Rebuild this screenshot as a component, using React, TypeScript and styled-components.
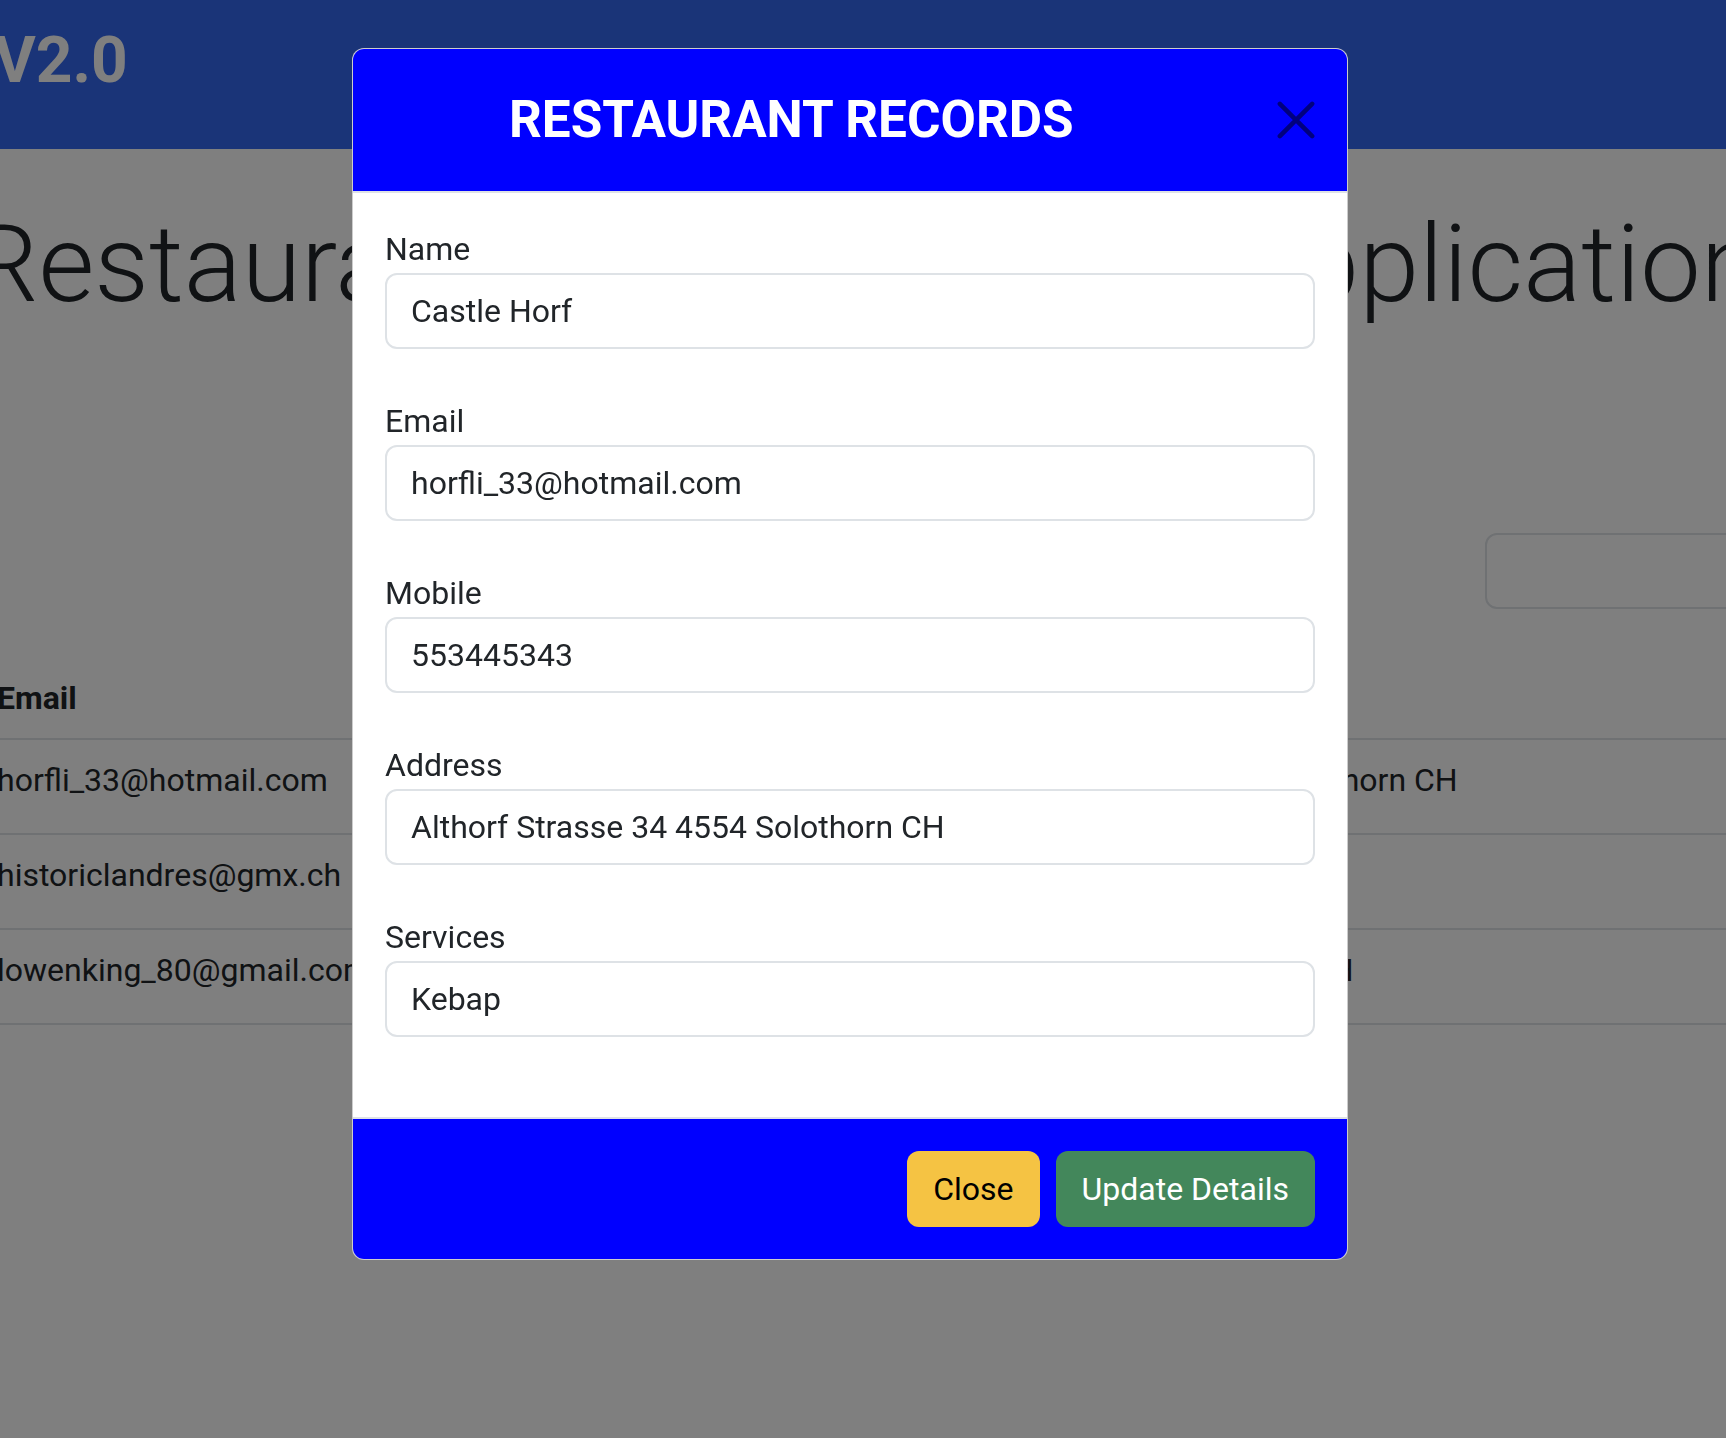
import React from "react";
import styled, { createGlobalStyle } from "styled-components";

const GlobalStyle = createGlobalStyle`
  html, body {
    margin: 0;
    padding: 0;
    background: #ffffff;
    overflow: hidden;
  }
  body {
    font-family: Roboto, "Noto Sans", "Liberation Sans", sans-serif;
    color: #212529;
    -webkit-font-smoothing: antialiased;
  }
  * { box-sizing: border-box; }
`;

const Page = styled.div`
  width: 100vw;
  height: 100vh;
  overflow: hidden;
  position: relative;
`;

const NavBar = styled.header`
  height: 149px;
  background: #3469f0;
  display: flex;
  align-items: flex-start;
  padding-top: 23px;
`;

const Brand = styled.div`
  margin-left: -6px;
  font-size: 64px;
  line-height: 1.2;
  font-weight: 700;
  color: #ffffff;
`;

const HeadingRow = styled.div`
  display: flex;
  justify-content: center;
  margin-top: 51px;
  padding-left: 4px;
`;

const Heading = styled.h1`
  flex-shrink: 0;
  margin: 0;
  white-space: nowrap;
  font-size: 108px;
  line-height: 1.2;
  font-weight: 300;
  color: #212529;
`;

const SearchRow = styled.div`
  display: flex;
  justify-content: flex-end;
  margin-top: 203px;
  margin-right: -200px;
`;

const SearchInput = styled.input`
  width: 441px;
  height: 76px;
  border: 2px solid #dee2e6;
  border-radius: 12px;
  background: #ffffff;
  font: inherit;
  font-size: 32px;
  padding: 12px 24px;
`;

const Table = styled.table`
  margin-top: 49px;
  margin-left: -379px;
  width: 2767px;
  table-layout: fixed;
  border-collapse: collapse;
  font-size: 32px;
  line-height: 48px;
  color: #212529;
  vertical-align: top;
`;

const Col = styled.col<{ $w: number }>`
  width: ${(p) => p.$w}px;
`;

const Th = styled.th`
  text-align: left;
  font-weight: 700;
  padding: 16px;
  border-bottom: 2px solid #dee2e6;
  white-space: nowrap;
  overflow: hidden;
`;

const Td = styled.td`
  padding: 16px;
  height: 95px;
  vertical-align: top;
  border-bottom: 2px solid #dee2e6;
  white-space: nowrap;
  overflow: hidden;
`;

const Backdrop = styled.div`
  position: fixed;
  inset: 0;
  background: rgba(0, 0, 0, 0.5);
`;

const ModalLayer = styled.div`
  position: fixed;
  inset: 0;
  padding-right: 26px;
  overflow: hidden;
`;

const Dialog = styled.div`
  width: 996px;
  margin: 48px auto 0;
  background: #ffffff;
  border: 1px solid rgba(0, 0, 0, 0.2);
  border-radius: 12px;
  overflow: hidden;
  display: flex;
  flex-direction: column;
`;

const ModalHeader = styled.div`
  display: flex;
  align-items: center;
  padding: 32px;
  background: #0000ff;
  border-bottom: 2px solid #dee2e6;
`;

const ModalTitle = styled.h4`
  margin: 0;
  padding-left: 124px;
  font-size: 51.3px;
  line-height: 78px;
  font-weight: 700;
  color: #ffffff;
  white-space: nowrap;
`;

const CloseButton = styled.button`
  margin-left: auto;
  width: 38px;
  height: 38px;
  padding: 0;
  border: 0;
  background: transparent;
  opacity: 0.5;
  cursor: pointer;
  display: flex;
  svg { display: block; }
`;

const ModalBody = styled.div`
  padding: 32px;
`;

const FormGroup = styled.div`
  margin-bottom: 48px;
`;

const Label = styled.label`
  display: block;
  font-size: 32px;
  line-height: 48px;
  color: #212529;
`;

const TextInput = styled.input`
  display: block;
  width: 100%;
  height: 76px;
  padding: 12px 24px;
  font-family: inherit;
  font-size: 32px;
  line-height: 48px;
  color: #212529;
  background: #ffffff;
  border: 2px solid #dee2e6;
  border-radius: 12px;
  outline: none;
`;

const ModalFooter = styled.div`
  display: flex;
  justify-content: flex-end;
  gap: 16px;
  padding: 32px;
  background: #0000ff;
  border-top: 2px solid #dee2e6;
`;

const Button = styled.button<{ $variant: "warning" | "success" }>`
  height: 76px;
  padding: 12px 24px;
  font-family: inherit;
  font-size: 32px;
  line-height: 48px;
  border: 2px solid transparent;
  border-radius: 12px;
  cursor: pointer;
  background: ${(p) => (p.$variant === "warning" ? "#f5c343" : "#43875b")};
  color: ${(p) => (p.$variant === "warning" ? "#000000" : "#ffffff")};
`;

const rows = [
  {
    name: "Castle Horf",
    email: "horfli_33@hotmail.com",
    mobile: "553445343",
    address: "Althorf Strasse 34 4554 Solothorn CH",
    services: "Kebap",
  },
  {
    name: "Historic Landres",
    email: "historiclandres@gmx.ch",
    mobile: "791234567",
    address: "Marktgasse 5 3011 Bern CH",
    services: "Pizza",
  },
  {
    name: "Lowen King",
    email: "lowenking_80@gmail.com",
    mobile: "765432109",
    address: "Löwenstrasse 8 3011 Bern CH",
    services: "Burger",
  },
];

const fields = [
  { label: "Name", value: "Castle Horf" },
  { label: "Email", value: "horfli_33@hotmail.com" },
  { label: "Mobile", value: "553445343" },
  { label: "Address", value: "Althorf Strasse 34 4554 Solothorn CH" },
  { label: "Services", value: "Kebap" },
];

export default function App() {
  return (
    <>
      <GlobalStyle />
      <Page>
        <NavBar>
          <Brand>V2.0</Brand>
        </NavBar>
        <HeadingRow>
          <Heading>Restaurant Administration Application</Heading>
        </HeadingRow>
        <SearchRow>
          <SearchInput type="text" aria-label="Search" />
        </SearchRow>
        <Table>
          <colgroup>
            <Col $w={360} />
            <Col $w={560} />
            <Col $w={367} />
            <Col $w={880} />
            <Col $w={300} />
            <Col $w={300} />
          </colgroup>
          <thead>
            <tr>
              <Th>Name</Th>
              <Th>Email</Th>
              <Th>Mobile</Th>
              <Th>Address</Th>
              <Th>Services</Th>
              <Th>Action</Th>
            </tr>
          </thead>
          <tbody>
            {rows.map((r) => (
              <tr key={r.email}>
                <Td>{r.name}</Td>
                <Td>{r.email}</Td>
                <Td>{r.mobile}</Td>
                <Td>{r.address}</Td>
                <Td>{r.services}</Td>
                <Td>Edit</Td>
              </tr>
            ))}
          </tbody>
        </Table>
        <Backdrop />
        <ModalLayer>
          <Dialog role="dialog" aria-modal="true">
            <ModalHeader>
              <ModalTitle>RESTAURANT RECORDS</ModalTitle>
              <CloseButton aria-label="Close">
                <svg width="38" height="38" viewBox="0 0 16 16">
                  <path
                    d="M1.2 1.2 L14.8 14.8 M14.8 1.2 L1.2 14.8"
                    stroke="#000"
                    strokeWidth="1.9"
                    strokeLinecap="round"
                    fill="none"
                  />
                </svg>
              </CloseButton>
            </ModalHeader>
            <ModalBody>
              {fields.map((f) => (
                <FormGroup key={f.label}>
                  <Label>{f.label}</Label>
                  <TextInput type="text" defaultValue={f.value} />
                </FormGroup>
              ))}
            </ModalBody>
            <ModalFooter>
              <Button $variant="warning">Close</Button>
              <Button $variant="success">Update Details</Button>
            </ModalFooter>
          </Dialog>
        </ModalLayer>
      </Page>
    </>
  );
}
